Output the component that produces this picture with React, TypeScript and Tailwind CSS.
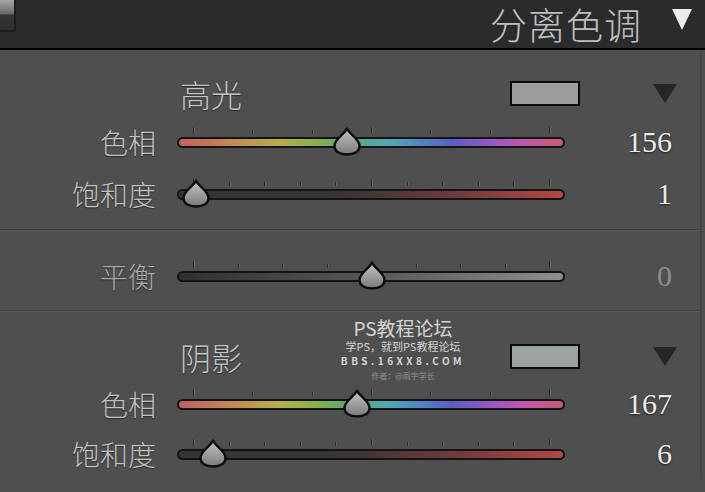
import React from "react";

const cjk = "font-['Noto_Sans_CJK_SC',sans-serif]";
const serif = "font-['Liberation_Serif',serif]";

type SliderProps = {
  track: string;
  ticks: number;
  thumb: number;
};

function Thumb({ left }: { left: number }) {
  return (
    <svg
      width="30"
      height="29"
      viewBox="0 0 30 29"
      className="absolute top-[calc(50%-15px)]"
      style={{ left: left - 15 }}
    >
      <defs>
        <linearGradient id="thumbFill" x1="0" y1="0" x2="0" y2="1">
          <stop offset="0" stopColor="#c6c6c6" />
          <stop offset="1" stopColor="#7a7a7a" />
        </linearGradient>
      </defs>
      <path
        d="M15 1.5 C17.5 7.5 27.5 11.5 27.5 19 C27.5 24.5 22.5 27.5 15 27.5 C7.5 27.5 2.5 24.5 2.5 19 C2.5 11.5 12.5 7.5 15 1.5 Z"
        fill="url(#thumbFill)"
        stroke="#0d0d0d"
        strokeWidth="2.4"
        strokeLinejoin="round"
      />
    </svg>
  );
}

function Slider({ track, ticks, thumb }: SliderProps) {
  const marks = Array.from({ length: ticks }, (_, i) => i);
  const mid = (ticks - 1) / 2;
  return (
    <div className="relative h-full w-[390px]">
      <div className="absolute left-0 right-0 top-[calc(50%-16px)] h-[8px]">
        {marks.map((i) => {
          const major = i === 0 || i === ticks - 1 || i === mid;
          return (
            <span
              key={i}
              className={`absolute bottom-0 w-[2px] bg-[#2a2a2a] border-r border-[#646464] ${major ? "h-[7px]" : "h-[4px]"}`}
              style={{ left: 16 + (356 * i) / (ticks - 1) }}
            />
          );
        })}
      </div>
      <div
        className={`absolute left-0 right-[2px] top-[calc(50%-5px)] h-[11px] rounded-full border-[2px] border-[#141414] ${track}`}
      />
      <Thumb left={thumb} />
    </div>
  );
}

function Row({
  label,
  value,
  dim,
  h,
  ...slider
}: SliderProps & { label: string; value: string; dim?: boolean; h: string }) {
  return (
    <div className={`flex items-center ${h}`}>
      <div
        className={`w-[156px] text-right text-[28px] leading-none font-light ${cjk} ${dim ? "text-[#a9a9a9]" : "text-[#c2c2c2]"} [text-shadow:0_1px_1px_#2a2a2a]`}
      >
        {label}
      </div>
      <div className="ml-[21px] h-full">
        <Slider {...slider} />
      </div>
      <div
        className={`w-[105px] text-right text-[30px] leading-none ${serif} ${dim ? "text-[#8c8c8c]" : "text-[#ececec] [text-shadow:0_1px_2px_#1a1a1a]"}`}
      >
        {value}
      </div>
    </div>
  );
}

function Heading({ label, swatch, h }: { label: string; swatch: string; h: string }) {
  return (
    <div className={`flex items-center ${h}`}>
      <div
        className={`ml-[180px] w-[330px] text-[31px] leading-none font-light text-[#c4c4c4] ${cjk} [text-shadow:0_1px_1px_#2a2a2a]`}
      >
        {label}
      </div>
      <div className={`w-[70px] h-[25px] border-[2px] border-[#0a0a0a] ${swatch}`} />
      <svg width="26" height="21" viewBox="0 0 26 21" className="ml-[72px]">
        <path d="M1 1 H25 L13 20 Z" fill="#262626" />
      </svg>
    </div>
  );
}

const hue =
  "bg-[linear-gradient(to_right,#c45f62_0%,#c08a55_14%,#b6ad4a_26%,#86b050_36%,#58a877_45%,#52a9b3_54%,#5284c2_63%,#5a5dc4_71%,#9a58c4_82%,#c257a8_90%,#c85a74_100%)]";
const satHi = "bg-[linear-gradient(to_right,#353535_0%,#3b3535_45%,#763c3c_75%,#b44646_100%)]";
const balance = "bg-[linear-gradient(to_right,#303030_0%,#575757_50%,#8e8e8e_100%)]";

export default function App() {
  return (
    <div className="w-[705px] h-[492px] overflow-hidden bg-[#4f4f4f] relative select-none">
      <header className="h-[48px] bg-[#2b2b2b] flex items-center">
        <div className="self-start w-[16px] h-[32px] bg-[linear-gradient(to_bottom,#a8a8a8,#6a6a6a_45%,#343434_50%,#2e2e2e)] border-r-[2px] border-b-[2px] border-[#1c1c1c]" />
        <div className="flex-1" />
        <div className={`text-[37px] leading-[46px] font-light tracking-[1px] text-[#bfbfbf] ${cjk}`}>
          分离色调
        </div>
        <svg width="22" height="23" viewBox="0 0 22 23" className="self-start ml-[29px] mr-[12px] mt-[8px]">
          <path d="M1 1 H21 L11 22 Z" fill="#ececec" />
        </svg>
      </header>
      <div className="h-[2px] bg-black" />

      <div className="border-r-[2px] border-[#464646] w-[702px]">
        <section className="pt-[20px] h-[179px]">
          <Heading label="高光" swatch="bg-[#9e9e9e]" h="h-[46px]" />
          <Row label="色相" value="156" h="h-[52px]" track={hue} ticks={7} thumb={170} />
          <Row label="饱和度" value="1" h="h-[52px]" track={satHi} ticks={11} thumb={19} />
        </section>
        <div className="h-[2px] bg-[#3f3f3f] border-b border-[#575757]" />

        <section className="pt-[19px] h-[79px]">
          <Row label="平衡" value="0" dim h="h-[52px]" track={balance} ticks={9} thumb={195} />
        </section>
        <div className="h-[2px] bg-[#3f3f3f] border-b border-[#575757]" />

        <section className="pt-[21px]">
          <Heading label="阴影" swatch="bg-[#9ba29f]" h="h-[46px]" />
          <Row label="色相" value="167" h="h-[50px]" track={hue} ticks={7} thumb={180} />
          <Row label="饱和度" value="6" h="h-[50px]" track={satHi} ticks={11} thumb={36} />
        </section>
      </div>

      <div
        className={`absolute left-[333px] top-[317px] w-[140px] flex flex-col items-center gap-[1px] text-[#d4d4d4] ${cjk} pointer-events-none`}
      >
        <div className="text-[19px] leading-[22px]">PS教程论坛</div>
        <div className="text-[11px] leading-[13px]">学PS，就到PS教程论坛</div>
        <div className="text-[10px] leading-[13px] tracking-[3.5px] font-bold">BBS.16XX8.COM</div>
        <div className="mt-[2px] text-[8px] leading-[11px] text-[#8f8f8f]">作者：@雨宇学长</div>
      </div>
    </div>
  );
}
